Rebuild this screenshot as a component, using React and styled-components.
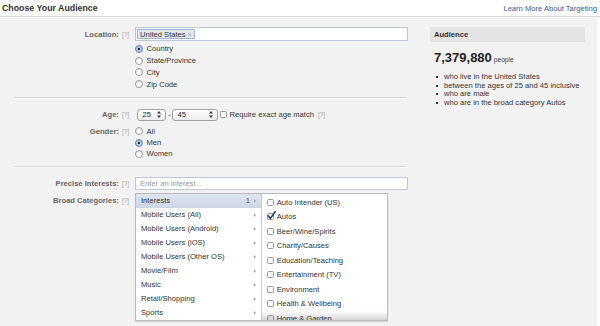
import React from 'react';
import styled, { createGlobalStyle } from 'styled-components';

const Global = createGlobalStyle`
  html, body { margin: 0; padding: 0; background: #fff; }
  body { font-family: "Liberation Sans", Arial, sans-serif; font-size: 7.6px; color: #333; }
  * { box-sizing: border-box; }
`;

const Page = styled.div`
  width: 600px;
  height: 326px;
  overflow: hidden;
`;

const Header = styled.header`
  display: flex;
  justify-content: space-between;
  align-items: center;
  height: 17px;
  padding: 0 3px 0 2px;
  border-bottom: 1px solid #dadada;
`;

const Title = styled.h1`
  margin: 0;
  font-size: 8.8px;
  font-weight: bold;
  color: #333;
`;

const TopLink = styled.a`
  font-size: 7.6px;
  color: #3b5998;
  text-decoration: none;
`;

const Main = styled.div`
  margin-top: 1px;
  width: 597px;
  height: 308px;
  background: #f2f2f2;
  display: flex;
`;

const Form = styled.div`
  width: 408px;
  padding-top: 9px;
  display: flex;
  flex-direction: column;
`;

const Field = styled.div`
  display: grid;
  grid-template-columns: 135px 273px;
  align-items: start;
  margin-top: ${p => p.$mt || 0}px;
`;

const LabelCell = styled.div`
  display: flex;
  justify-content: flex-end;
  align-items: center;
  gap: 3px;
  height: ${p => p.$h}px;
  padding-top: ${p => p.$pt || 0}px;
  padding-right: 6px;
`;

const Label = styled.span`
  font-weight: bold;
  color: #666;
`;

const Help = styled.span`
  color: #a8a8a8;
  font-size: 6.4px;
  margin-left: ${p => p.$ml || 0}px;
`;

const TextInput = styled.div`
  height: ${p => p.$h}px;
  border: 1px solid #bdc7d8;
  background: #fff;
  display: flex;
  align-items: center;
  padding-left: ${p => p.$pl}px;
  color: #999;
`;

const Token = styled.span`
  display: inline-flex;
  align-items: center;
  gap: 2px;
  height: 10px;
  padding: 0 2px 0 2px;
  border: 1px solid #9fb0d2;
  border-radius: 1px;
  background: #e2e8f3;
  color: #333;
`;

const TokenX = styled.span`
  color: #8a99ba;
  font-size: 7px;
`;

const Stack = styled.div`
  display: flex;
  flex-direction: column;
`;

const RadioGroup = styled.div`
  display: flex;
  flex-direction: column;
  margin-top: ${p => p.$mt || 0}px;
`;

const RadioRow = styled.label`
  display: flex;
  align-items: center;
  gap: 3.5px;
  height: ${p => p.$h}px;
  color: #333;
`;

const RadioDot = styled.span`
  width: 8px;
  height: 8px;
  border-radius: 50%;
  border: 1px solid ${p => (p.$on ? '#6d86a8' : '#9a9a9a')};
  background: ${p =>
    p.$on
      ? 'radial-gradient(circle, #1e2a3a 0 1.1px, #b9d3f2 1.5px, #8fb3e3 100%)'
      : 'linear-gradient(#f6f6f6, #ffffff)'};
  box-shadow: inset 0 1px 1px rgba(0, 0, 0, 0.08);
`;

const Divider = styled.div`
  margin: ${p => p.$mt}px 0 0 15px;
  width: 392px;
  height: 1px;
  background: #d8d8d8;
  box-shadow: 0 1px 0 #fafafa;
  margin-bottom: 1px;
`;

const AgeRow = styled.div`
  display: flex;
  align-items: center;
  height: 12px;
  padding-left: 2px;
`;

const Select = styled.div`
  display: flex;
  align-items: center;
  justify-content: space-between;
  width: ${p => p.$w}px;
  height: 12px;
  padding: 0 4px 0 4.5px;
  border: 1px solid #a3a3a3;
  border-radius: 3px;
  background: linear-gradient(#ffffff, #ececec);
  color: #222;
`;

const Dash = styled.span`
  width: 6px;
  text-align: center;
  color: #555;
`;

const Box = styled.span`
  flex: none;
  width: 7px;
  height: 7px;
  border: 1px solid #9a9a9a;
  border-radius: 1.5px;
  background: linear-gradient(#f4f4f4, #ffffff);
  position: relative;
  margin-left: ${p => p.$ml || 0}px;
`;

const CheckText = styled.span`
  margin-left: 2.5px;
  color: #333;
`;

const Check = styled.svg`
  position: absolute;
  left: -1px;
  top: -3px;
`;

const ListBox = styled.div`
  display: flex;
  width: 253px;
  height: 128px;
  border: 1px solid #b9b9b9;
  background: #fff;
  box-shadow: 0 1px 1px rgba(0, 0, 0, 0.12);
`;

const CatList = styled.div`
  width: 126px;
  border-right: 1px solid #c8c8c8;
  display: flex;
  flex-direction: column;
`;

const CatRow = styled.div`
  display: flex;
  align-items: center;
  height: 14px;
  padding: 0 5px 0 5px;
  color: #333;
  background: ${p => (p.$sel ? 'linear-gradient(#dfe5ef, #ced6e4)' : 'transparent')};
`;

const CatName = styled.span`
  flex: 1;
`;

const Count = styled.span`
  color: #555;
  margin-right: 4px;
`;

const Arrow = styled.span`
  width: 0;
  height: 0;
  border-left: 2.5px solid #aaa;
  border-top: 2px solid transparent;
  border-bottom: 2px solid transparent;
`;

const SubList = styled.div`
  flex: 1;
  position: relative;
  overflow: hidden;
  padding-top: 1.5px;
  &::after {
    content: '';
    position: absolute;
    left: 0;
    right: 0;
    bottom: 0;
    height: 9px;
    background: linear-gradient(rgba(0, 0, 0, 0), rgba(0, 0, 0, 0.16));
  }
`;

const SubRow = styled.div`
  display: flex;
  align-items: center;
  height: 14.5px;
  padding-left: 4.5px;
  color: #333;
`;

const SubText = styled.span`
  margin-left: 3.3px;
`;

const Side = styled.aside`
  margin-left: 22px;
  width: 155px;
  padding-top: 9px;
`;

const SideHead = styled.div`
  height: 15px;
  background: #e4e4e4;
  display: flex;
  align-items: center;
  padding-left: 4px;
  font-weight: bold;
  color: #333;
`;

const Reach = styled.div`
  margin-top: 8.7px;
  padding-left: 4px;
  line-height: 13px;
  color: #222;
`;

const ReachNum = styled.span`
  font-size: 13px;
  font-weight: bold;
`;

const ReachUnit = styled.span`
  font-size: 6.6px;
  margin-left: 2px;
  color: #444;
`;

const Bullets = styled.ul`
  list-style: none;
  margin: 7.6px 0 0 0;
  padding: 0;
`;

const Bullet = styled.li`
  position: relative;
  padding-left: 14px;
  line-height: 8.4px;
  color: #333;
  &::before {
    content: '';
    position: absolute;
    left: 6px;
    top: 3.2px;
    width: 2px;
    height: 2px;
    background: #333;
  }
`;

const UpDown = () => (
  <svg width="4" height="7" viewBox="0 0 4 7">
    <path d="M2 0 L4 2.6 L0 2.6 Z M2 7 L4 4.4 L0 4.4 Z" fill="#333" />
  </svg>
);

const Radio = ({ on, h, children }) => (
  <RadioRow $h={h}>
    <RadioDot $on={on} />
    {children}
  </RadioRow>
);

const categories = [
  { name: 'Interests', count: 1, sel: true },
  { name: 'Mobile Users (All)' },
  { name: 'Mobile Users (Android)' },
  { name: 'Mobile Users (iOS)' },
  { name: 'Mobile Users (Other OS)' },
  { name: 'Movie/Film' },
  { name: 'Music' },
  { name: 'Retail/Shopping' },
  { name: 'Sports' },
];

const subs = [
  { name: 'Auto Intender (US)' },
  { name: 'Autos', on: true },
  { name: 'Beer/Wine/Spirits' },
  { name: 'Charity/Causes' },
  { name: 'Education/Teaching' },
  { name: 'Entertainment (TV)' },
  { name: 'Environment' },
  { name: 'Health & Wellbeing' },
  { name: 'Home & Garden' },
];

export default function App() {
  return (
    <Page>
      <Global />
      <Header>
        <Title>Choose Your Audience</Title>
        <TopLink href="#">Learn More About Targeting</TopLink>
      </Header>
      <Main>
        <Form>
          <Field>
            <LabelCell $h={14}>
              <Label>Location:</Label>
              <Help>[?]</Help>
            </LabelCell>
            <Stack>
              <TextInput $h={14} $pl={1}>
                <Token>
                  United States<TokenX>×</TokenX>
                </Token>
              </TextInput>
              <RadioGroup $mt={2}>
                <Radio on h={11.8}>Country</Radio>
                <Radio h={11.8}>State/Province</Radio>
                <Radio h={11.8}>City</Radio>
                <Radio h={11.8}>Zip Code</Radio>
              </RadioGroup>
            </Stack>
          </Field>

          <Divider $mt={6.5} />

          <Field $mt={10.3}>
            <LabelCell $h={12}>
              <Label>Age:</Label>
              <Help>[?]</Help>
            </LabelCell>
            <AgeRow>
              <Select $w={29}>
                25
                <UpDown />
              </Select>
              <Dash>-</Dash>
              <Select $w={46}>
                45
                <UpDown />
              </Select>
              <Box $ml={2} />
              <CheckText>Require exact age match</CheckText>
              <Help $ml={4}>[?]</Help>
            </AgeRow>
          </Field>

          <Field $mt={4.5}>
            <LabelCell $h={11.4}>
              <Label>Gender:</Label>
              <Help>[?]</Help>
            </LabelCell>
            <RadioGroup>
              <Radio h={11.4}>All</Radio>
              <Radio on h={11.4}>Men</Radio>
              <Radio h={11.4}>Women</Radio>
            </RadioGroup>
          </Field>

          <Divider $mt={6.5} />

          <Field $mt={9}>
            <LabelCell $h={13}>
              <Label>Precise Interests:</Label>
              <Help>[?]</Help>
            </LabelCell>
            <TextInput $h={13} $pl={4}>Enter an interest...</TextInput>
          </Field>

          <Field $mt={2.5}>
            <LabelCell $h={15} $pt={1}>
              <Label>Broad Categories:</Label>
              <Help>[?]</Help>
            </LabelCell>
            <ListBox>
              <CatList>
                {categories.map(c => (
                  <CatRow key={c.name} $sel={c.sel}>
                    <CatName>{c.name}</CatName>
                    {c.count && <Count>{c.count}</Count>}
                    <Arrow />
                  </CatRow>
                ))}
              </CatList>
              <SubList>
                {subs.map(s => (
                  <SubRow key={s.name}>
                    <Box>
                      {s.on && (
                        <Check width="9" height="9" viewBox="0 0 9 9">
                          <path
                            d="M1.2 4.8 L3.4 7.4 L8.2 0.8"
                            fill="none"
                            stroke="#1d3f78"
                            strokeWidth="1.6"
                            strokeLinecap="round"
                            strokeLinejoin="round"
                          />
                        </Check>
                      )}
                    </Box>
                    <SubText>{s.name}</SubText>
                  </SubRow>
                ))}
              </SubList>
            </ListBox>
          </Field>
        </Form>

        <Side>
          <SideHead>Audience</SideHead>
          <Reach>
            <ReachNum>7,379,880</ReachNum>
            <ReachUnit>people</ReachUnit>
          </Reach>
          <Bullets>
            <Bullet>who live in the United States</Bullet>
            <Bullet>between the ages of 25 and 45 inclusive</Bullet>
            <Bullet>who are male</Bullet>
            <Bullet>who are in the broad category Autos</Bullet>
          </Bullets>
        </Side>
      </Main>
    </Page>
  );
}
